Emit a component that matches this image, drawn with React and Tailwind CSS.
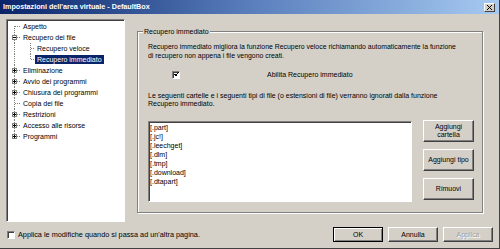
import React from "react";

const treeItems = [
  { label: "Aspetto", level: 0, first: true },
  { label: "Recupero dei file", level: 0, box: "-" },
  { label: "Recupero veloce", level: 1 },
  { label: "Recupero immediato", level: 1, selected: true, lastChild: true },
  { label: "Eliminazione", level: 0, box: "+" },
  { label: "Avvio dei programmi", level: 0, box: "+" },
  { label: "Chiusura dei programmi", level: 0, box: "+" },
  { label: "Copia dei file", level: 0 },
  { label: "Restrizioni", level: 0, box: "+" },
  { label: "Accesso alle risorse", level: 0, box: "+" },
  { label: "Programmi", level: 0, box: "+", last: true },
];

const extensions = [
  "[.part]",
  "[.jc!]",
  "[.leechget]",
  "[.dlm]",
  "[.tmp]",
  "[.download]",
  "[.dtapart]",
];

function RootGutter({ item }) {
  const showBranch = item.level === 0;
  return (
    <svg width="13" height="11" className="shrink-0" shapeRendering="crispEdges">
      <line
        x1="6.5"
        x2="6.5"
        y1={item.first && showBranch ? 5 : 0}
        y2={item.last ? 6 : 11}
        stroke="#808080"
        strokeDasharray="1 1"
      />
      {showBranch && (
        <line x1="7" x2="13" y1="5.5" y2="5.5" stroke="#808080" strokeDasharray="1 1" />
      )}
      {item.box && (
        <g>
          <rect x="4.5" y="3.5" width="4" height="4" fill="#fff" stroke="#808080" />
          <line x1="5" x2="8" y1="5.5" y2="5.5" stroke="#000" />
          {item.box === "+" && <line x1="6.5" x2="6.5" y1="4" y2="7" stroke="#000" />}
        </g>
      )}
    </svg>
  );
}

function ChildGutter({ item }) {
  return (
    <svg width="14" height="11" className="shrink-0" shapeRendering="crispEdges">
      <line
        x1="9.5"
        x2="9.5"
        y1="0"
        y2={item.lastChild ? 6 : 11}
        stroke="#808080"
        strokeDasharray="1 1"
      />
      <line x1="10" x2="14" y1="5.5" y2="5.5" stroke="#808080" strokeDasharray="1 1" />
    </svg>
  );
}

function Button({ children, className = "", disabled = false, isDefault = false }) {
  return (
    <div
      className={
        "flex items-center justify-center text-center leading-[8px] " +
        (isDefault
          ? "border border-black shadow-[inset_1px_1px_0_#fff,inset_-1px_-1px_0_#808080] "
          : "border border-t-white border-l-white border-r-[#404040] border-b-[#404040] shadow-[inset_-1px_-1px_0_#808080] ") +
        (disabled ? "text-[#a0a0a0] [text-shadow:1px_1px_0_#fff] " : "text-black ") +
        className
      }
    >
      {children}
    </div>
  );
}

function CheckBox({ checked, className = "" }) {
  return (
    <div
      className={
        "bg-white border border-t-[#808080] border-l-[#808080] border-b-white border-r-white shadow-[inset_1px_1px_0_#404040] flex items-center justify-center " +
        className
      }
    >
      {checked && (
        <svg width="5" height="5" viewBox="0 0 5 5" shapeRendering="crispEdges">
          <path d="M0 2h1v1H0zM1 3h1v1H1zM2 2h1v1H2zM3 1h1v1H3zM4 0h1v1H4zM1 2h1v1H1zM2 3h1v1H2z" fill="#000" />
        </svg>
      )}
    </div>
  );
}

export default function App() {
  return (
    <div className="w-[500px] h-[249px] bg-[#d4d0c8] flex flex-col border-r border-b border-r-[#404040] border-b-[#404040] text-[7px] text-black font-['Liberation_Sans',Arial,sans-serif] overflow-hidden">
      {/* Title bar */}
      <div className="h-[14px] shrink-0 flex items-center bg-linear-to-r from-[#0a246a] via-[#5a7ebc] to-[#a6caf0] pl-[3px] pr-[4px]">
        <span className="text-white font-bold text-[7.2px] leading-none">
          Impostazioni dell'area virtuale - DefaultBox
        </span>
        <div className="ml-auto w-[11px] h-[9px] bg-[#d4d0c8] border border-t-white border-l-white border-r-[#404040] border-b-[#404040] flex items-center justify-center">
          <svg width="5" height="5" viewBox="0 0 5 5" shapeRendering="crispEdges">
            <path d="M0 0L5 5M5 0L0 5" stroke="#000" strokeWidth="1.2" />
          </svg>
        </div>
      </div>

      {/* Main area */}
      <div className="flex mt-[5px] ml-[6px]">
        {/* Tree */}
        <div className="w-[119px] h-[203px] bg-white border border-t-[#808080] border-l-[#808080] border-b-white border-r-white shadow-[inset_1px_1px_0_#404040] pt-[1px] pl-[1px]">
          {treeItems.map((item) => (
            <div key={item.label} className="flex h-[11px] items-center">
              <RootGutter item={item} />
              {item.level === 1 && <ChildGutter item={item} />}
              <span
                className={
                  "px-[2px] h-[9px] leading-[9px] whitespace-nowrap " +
                  (item.selected ? "bg-[#0a246a] text-white" : "")
                }
              >
                {item.label}
              </span>
            </div>
          ))}
        </div>

        {/* Group box */}
        <div className="relative ml-[12px] mt-[12px] w-[346px] h-[182px] border border-[#808080] shadow-[1px_1px_0_#fff,inset_1px_1px_0_#fff] pl-[10px] pr-[8px] pt-[10px]">
          <span className="absolute -top-[5px] left-[5px] bg-[#d4d0c8] px-[1px] leading-[9px]">
            Recupero immediato
          </span>

          <p className="leading-[9px] whitespace-nowrap text-[6.9px]">
            Recupero immediato migliora la funzione Recupero veloce richiamando automaticamente la funzione
            <br />
            di recupero non appena i file vengono creati.
          </p>

          <div className="flex items-center mt-[11px] h-[7px]">
            <CheckBox checked className="w-[8px] h-[8px] ml-[24px]" />
            <span className="ml-[87px] leading-[8px]">Abilita Recupero immediato</span>
          </div>

          <p className="mt-[14px] leading-[8px] whitespace-nowrap">
            Le seguenti cartelle e i seguenti tipi di file (o estensioni di file) verranno ignorati dalla funzione
            <br />
            Recupero immediato.
          </p>

          <div className="flex mt-[12px]">
            <div className="mt-[1px] w-[264px] h-[81px] bg-white border border-t-[#808080] border-l-[#808080] border-b-white border-r-white shadow-[inset_1px_1px_0_#404040] pl-[1px] pt-[1px]">
              {extensions.map((ext) => (
                <div key={ext} className="leading-[9px] h-[9px]">
                  {ext}
                </div>
              ))}
            </div>
            <div className="ml-[11px] flex flex-col gap-[7px]">
              <Button className="w-[51px] h-[22px]">
                Aggiungi
                <br />
                cartella
              </Button>
              <Button className="w-[51px] h-[22px]">Aggiungi tipo</Button>
              <Button className="w-[51px] h-[22px]">Rimuovi</Button>
            </div>
          </div>
        </div>
      </div>

      {/* Bottom row */}
      <div className="flex items-center mt-[5px] h-[15px]">
        <CheckBox className="w-[8px] h-[8px] ml-[7px]" />
        <span className="ml-[3px] leading-[8px] text-[7.3px]">
          Applica le modifiche quando si passa ad un'altra pagina.
        </span>
        <div className="ml-auto mr-[6px] flex gap-[5px]">
          <Button isDefault className="w-[50px] h-[15px]">OK</Button>
          <Button className="w-[50px] h-[15px]">Annulla</Button>
          <Button disabled className="w-[50px] h-[15px]">Applica</Button>
        </div>
      </div>
    </div>
  );
}
